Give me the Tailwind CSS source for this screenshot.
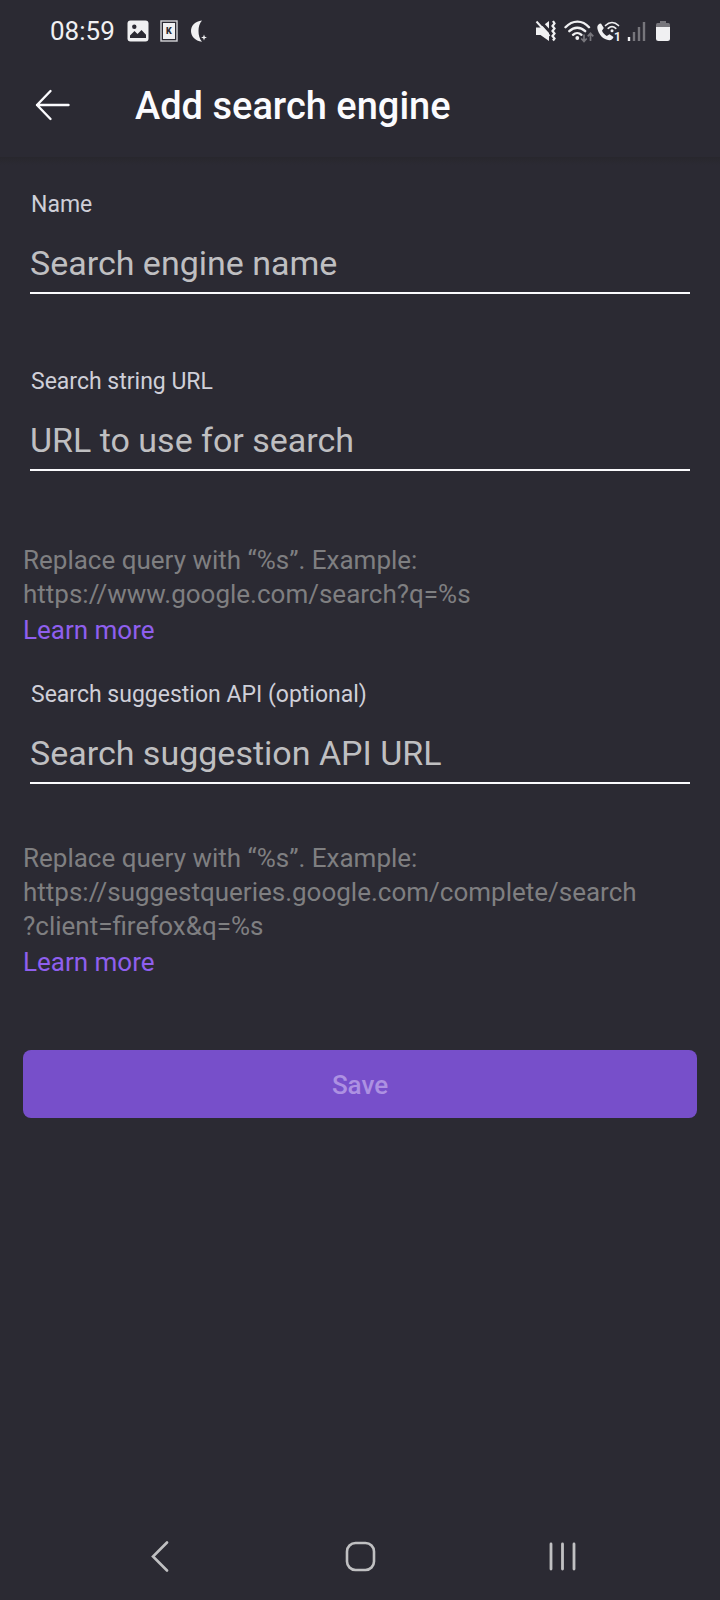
<!DOCTYPE html>
<html lang="en">
<head>
<meta charset="utf-8">
<meta name="viewport" content="width=device-width, initial-scale=1">
<title>Add search engine</title>
<script src="https://cdn.jsdelivr.net/npm/@tailwindcss/browser@4"></script>
</head>
<body class="flex min-h-screen flex-col bg-[#2b2a33] font-['Roboto',sans-serif] text-[#fbfbfe]">

<!-- System status bar -->
<div class="flex h-[62px] items-center justify-between pr-[49px] pl-[50px] text-[#f0f0f2]">
  <div class="flex items-center">
    <span class="text-[26px] leading-[34px]">08:59</span>
    <svg class="ml-[12px]" width="22" height="22" viewBox="0 0 22 22" aria-hidden="true">
      <rect x="0.5" y="0.5" width="21" height="21" rx="3" fill="#f0f0f2"/>
      <circle cx="7.3" cy="6.7" r="2.2" fill="#2b2a33"/>
      <path d="M3 15.5 7.5 11l3 3L14.5 10l4.500 4.700V18H3z" fill="#2b2a33"/>
    </svg>
    <svg class="ml-[11px]" width="18" height="22" viewBox="0 0 18 22" aria-hidden="true">
      <rect x="1" y="1" width="16" height="20" fill="#2b2a33" stroke="#d4d4d8" stroke-width="1.400"/>
      <rect x="3" y="3" width="12" height="16" fill="#f0f0f2"/>
      <text x="9" y="14" text-anchor="middle" font-size="9" font-weight="900" fill="#2b2a33">K</text>
    </svg>
    <svg class="ml-[12px]" width="18" height="22" viewBox="0 0 18 22" aria-hidden="true">
      <path d="M12 .5C5 1 1 6 1 11s4 10 11 10.700C9.500 19 8.500 15 8.500 11S9.500 3.200 12 .5z" fill="#f0f0f2"/>
      <path d="m14 14.500.8 2.200 2.200.8-2.200.8-.8 2.200-.8-2.200-2.200-.8 2.200-.8z" fill="#f0f0f2"/>
    </svg>
  </div>
  <div class="flex items-center">
    <svg width="22" height="24" viewBox="0 0 22 24" aria-hidden="true">
      <path d="M1 8.500h4.500L14 2v20l-8.500-6H1z" fill="#f0f0f2"/>
      <path d="M4 1 16 14" stroke="#2b2a33" stroke-width="3"/>
      <path d="m1.500 2.500 13 14.500" stroke="#f0f0f2" stroke-width="2"/>
      <path d="m18 2 1.500 2.500-2 2.500 2 2.500-2 2.500 2 2.500-2 2.500 2 2.500-1.500 2" fill="none" stroke="#f0f0f2" stroke-width="2.200"/>
    </svg>
    <svg class="ml-[7px]" width="31" height="24" viewBox="0 0 31 24" aria-hidden="true">
      <g fill="none" stroke="#f0f0f2" stroke-width="2.400" stroke-linecap="round">
        <path d="M1.500 8.200C8.500.7 18.500.7 25 8.200"/>
        <path d="M5.300 12.200c4.700-4.700 11.200-4.700 15.900 0"/>
        <path d="M9 15.800c2.500-2.300 6-2.300 8.500 0"/>
      </g>
      <circle cx="13.300" cy="19" r="1.900" fill="#f0f0f2"/>
      <path d="M20 15.500v7M17.300 19.500l2.700 3 2.700-3M26.500 22v-7.500M23.700 17.300l2.800-3 2.800 3" fill="none" stroke="#77767c" stroke-width="1.700"/>
    </svg>
    <svg class="ml-[1px]" width="26" height="24" viewBox="0 0 26 24" aria-hidden="true">
      <path d="M5 4.500C3 4.500 1 6 1.300 9c.9 6.500 6.200 11.800 12 12.200 2 .1 3.700-1.200 4.200-3.200l-4-2.800-2.700 1.900c-2-1.200-3.800-3-4.800-5.300L7.800 9z" fill="#f0f0f2"/>
      <g fill="none" stroke="#f0f0f2" stroke-width="1.700" stroke-linecap="round">
        <path d="M9.500 6.500c4-3.800 9-3.800 13 0"/>
        <path d="M12.200 9.300c2.500-2.200 5.100-2.200 7.600 0"/>
      </g>
      <circle cx="16" cy="11.800" r="1.500" fill="#f0f0f2"/>
      <text x="18" y="22" font-size="12" font-weight="700" fill="#f0f0f2">1</text>
    </svg>
    <svg class="ml-[5px]" width="20" height="24" viewBox="0 0 20 24" aria-hidden="true">
      <path d="M2 18v4" stroke="#f0f0f2" stroke-width="2.400"/>
      <path d="M7 13v9M12 8v14M17 3v19" stroke="#77767c" stroke-width="2.400"/>
    </svg>
    <svg class="ml-[8px]" width="16" height="24" viewBox="0 0 16 24" aria-hidden="true">
      <path d="M5 2h6v2h2.500Q15 4 15 6v3H1V6q0-2 1.500-2H5z" fill="#77767c"/>
      <path d="M1 8h14v11.500q0 2.500-2.500 2.500h-9Q1 22 1 19.500z" fill="#f0f0f2"/>
    </svg>
  </div>
</div>

<!-- App bar -->
<header class="flex h-[95px] items-center pb-[9px] pl-[32px]">
  <button type="button" aria-label="Back" class="flex size-[40px] items-center justify-center">
    <svg width="40" height="40" viewBox="0 0 40 40" fill="none" stroke="#fbfbfe" stroke-width="2.400" stroke-linecap="round" stroke-linejoin="round" aria-hidden="true">
      <path d="M36.500 20H5M18.500 6 5 20l13.500 14"/>
    </svg>
  </button>
  <h1 class="ml-[63px] pt-[2px] text-[38px] leading-[46px] font-medium">Add search engine</h1>
</header>
<div class="h-[8px] bg-linear-to-b from-[#28272d] to-[#2b2a33]"></div>

<main class="flex-1 px-[23px] pt-[26px]">
  <form>
    <div class="px-[7px]">
      <label for="name" class="block pl-px text-[23px] leading-[28px] text-[#cfcfd8]">Name</label>
      <input id="name" type="text" placeholder="Search engine name" class="block h-[75px] w-full border-b-2 border-[#fbfbfe] bg-transparent pt-[15px] text-[34px] outline-none placeholder:text-[#bfbfc1]">
    </div>

    <div class="mt-[74px] px-[7px]">
      <label for="search-url" class="block pl-px text-[23px] leading-[28px] text-[#cfcfd8]">Search string URL</label>
      <input id="search-url" type="text" placeholder="URL to use for search" class="block h-[75px] w-full border-b-2 border-[#fbfbfe] bg-transparent pt-[15px] text-[34px] outline-none placeholder:text-[#bfbfc1]">
    </div>
    <p class="mt-[72px] text-[26px] leading-[34px] text-[#7f7f81]">Replace query with “%s”. Example:<br>https://www.google.com/search?q=%s</p>
    <a href="#" class="mt-[2px] block w-fit text-[26px] leading-[34px] text-[#8f5fee]">Learn more</a>

    <div class="mt-[34px] px-[7px]">
      <label for="suggest-url" class="block pl-px text-[23px] leading-[28px] text-[#cfcfd8]">Search suggestion API (optional)</label>
      <input id="suggest-url" type="text" placeholder="Search suggestion API URL" class="block h-[75px] w-full border-b-2 border-[#fbfbfe] bg-transparent pt-[15px] text-[34px] outline-none placeholder:text-[#bfbfc1]">
    </div>
    <p class="mt-[57px] text-[26px] leading-[34px] text-[#7f7f81]">Replace query with “%s”. Example:<br>https://suggestqueries.google.com/complete/search<br>?client=firefox&amp;q=%s</p>
    <a href="#" class="mt-[2px] block w-fit text-[26px] leading-[34px] text-[#8f5fee]">Learn more</a>

    <button type="submit" disabled class="mt-[71px] block h-[68px] w-full rounded-lg bg-[#774fca] pt-[2px] text-[26px] leading-[34px] font-medium text-[#ad91e2]">Save</button>
  </form>
</main>

<!-- System navigation -->
<nav class="grid h-[88px] grid-cols-3 items-center px-[60px]">
  <button type="button" aria-label="Back" class="flex justify-center">
    <svg width="32" height="32" viewBox="0 0 32 32" fill="none" stroke="#c0c0c2" stroke-width="2.600" stroke-linecap="round" aria-hidden="true"><path d="M23 2.500 9 16.500l14 14"/></svg>
  </button>
  <button type="button" aria-label="Home" class="flex justify-center">
    <svg width="32" height="32" viewBox="0 0 32 32" fill="none" stroke="#c0c0c2" stroke-width="2.600" aria-hidden="true"><rect x="3" y="3" width="27" height="27" rx="8.500"/></svg>
  </button>
  <button type="button" aria-label="Recent apps" class="flex justify-center">
    <svg width="32" height="32" viewBox="0 0 32 32" fill="none" stroke="#c0c0c2" stroke-width="2.800" stroke-linecap="round" aria-hidden="true"><path d="M7 4v25M18.500 4v25M30 4v25"/></svg>
  </button>
</nav>
</body>
</html>
